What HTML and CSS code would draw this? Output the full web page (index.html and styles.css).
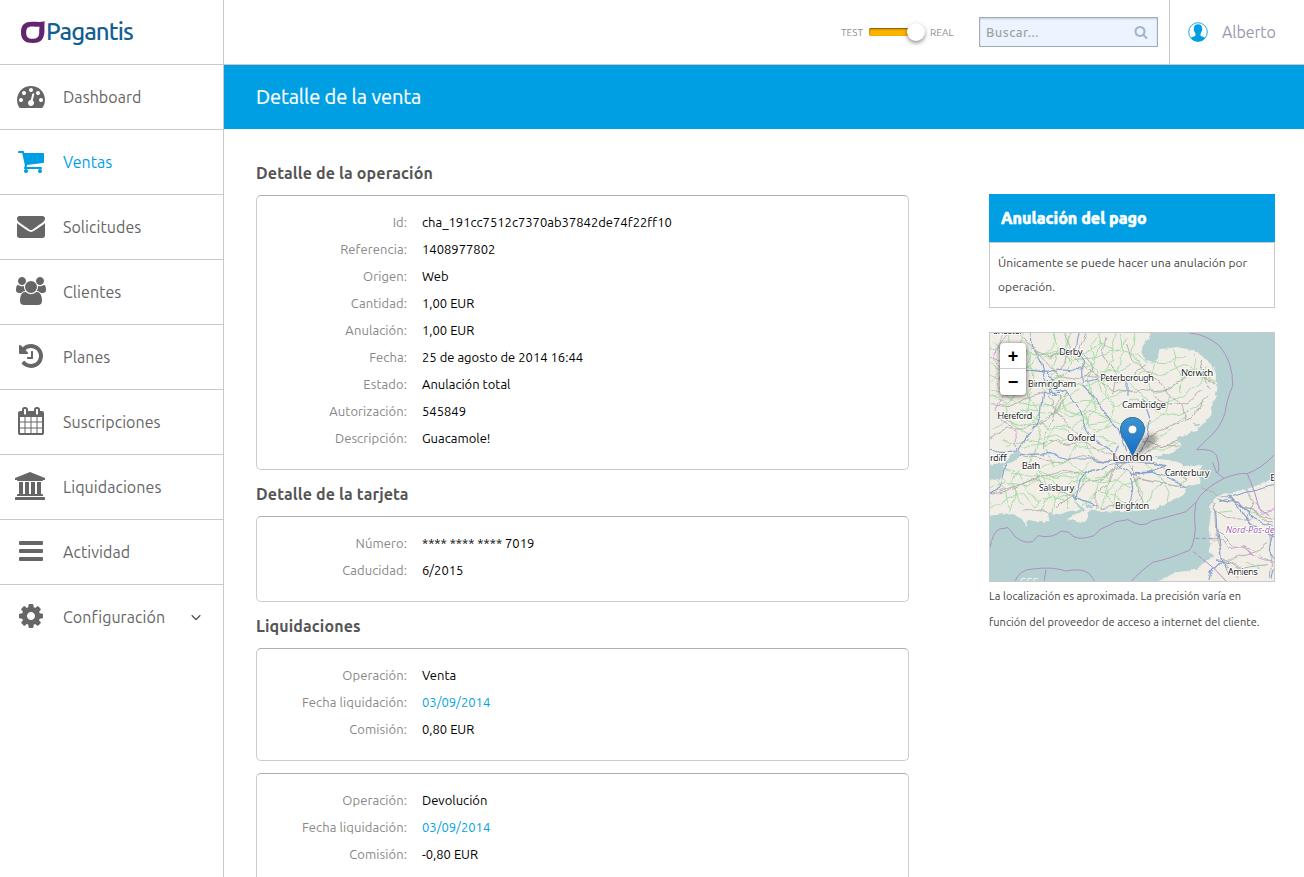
FILE: index.html
```html
<!DOCTYPE html>
<html lang="es">
<head>
<meta charset="utf-8">
<title>Pagantis - Detalle de la venta</title>
<link rel="stylesheet" href="styles.css">
</head>
<body>
<div class="app">
  <aside class="sidebar">
    <a class="logo">
      <svg class="logo-mark" viewBox="0 0 24 23" width="24" height="23"><path fill="#64256f" fill-rule="evenodd" d="M23.800 .3C23.300 2 23.500 5 23.500 9c0 9-3.500 13-11.500 13S0 19 0 11.500 3.500 .8 11 .8c4 0 9 .7 12.800-.5zM11.500 5.500C7 5.500 5.200 7 5.200 11.500s1.800 6.300 6.300 6.300 6.700-2 6.700-6.300c0-3.300.2-4.500.3-5.800-2 .2-5-.2-7-.2z"/></svg>
      <span class="logo-text">Pagantis</span>
    </a>
    <nav class="menu">
      <a class="item"><svg class="icon" viewBox="0 0 1792 1792"><path d="M384 1152q0-53-37.500-90.500t-90.500-37.500-90.500 37.500-37.500 90.500 37.500 90.500 90.500 37.500 90.500-37.500 37.500-90.500zm192-448q0-53-37.500-90.500t-90.500-37.500-90.500 37.500-37.500 90.500 37.500 90.500 90.500 37.500 90.500-37.500 37.500-90.500zm428 481l101-382q6-26-7.500-48.500t-38.500-29.500-48 6.500-30 39.500l-101 382q-60 5-107 43.500t-63 98.500q-20 77 20 146t117 89 146-20 89-117q16-60-6-117t-72-91zm660-33q0-53-37.500-90.500t-90.500-37.500-90.500 37.500-37.500 90.500 37.500 90.500 90.500 37.500 90.500-37.500 37.500-90.500zm-640-640q0-53-37.500-90.500t-90.500-37.500-90.500 37.500-37.500 90.500 37.500 90.500 90.500 37.500 90.500-37.500 37.500-90.500zm448 192q0-53-37.500-90.500t-90.500-37.500-90.500 37.500-37.500 90.500 37.500 90.500 90.500 37.500 90.500-37.500 37.500-90.500zm320 448q0 261-141 483-19 29-54 29h-1402q-35 0-54-29-141-221-141-483 0-182 71-348t191-286 286-191 348-71 348 71 286 191 191 286 71 348z"/></svg><span class="name">Dashboard</span></a>
      <a class="item active"><svg class="icon" viewBox="0 0 1792 1792"><path d="M704 1536q0 52-38 90t-90 38-90-38-38-90 38-90 90-38 90 38 38 90zm896 0q0 52-38 90t-90 38-90-38-38-90 38-90 90-38 90 38 38 90zm128-1088v512q0 24-16.500 42.500t-40.500 21.500l-1044 122q13 60 13 70 0 16-24 64h920q26 0 45 19t19 45-19 45-45 19h-1024q-26 0-45-19t-19-45q0-11 8-31.500t16-36 21.500-40 15.500-29.500l-177-823h-204q-26 0-45-19t-19-45 19-45 45-19h256q16 0 28.500 6.500t19.500 15.500 13 24.500 8 26 5.500 29.500 4.500 26h1201q26 0 45 19t19 45z"/></svg><span class="name">Ventas</span></a>
      <a class="item"><svg class="icon" viewBox="0 0 1792 1792"><path d="M1792 710v794q0 66-47 113t-113 47h-1472q-66 0-113-47t-47-113v-794q44 49 101 87 362 246 497 345 57 42 92.500 65.500t94.500 48 110 24.500h2q51 0 110-24.500t94.500-48 92.500-65.500q170-123 498-345 57-39 100-87zm0-294q0 79-49 151t-122 123q-376 261-468 325-10 7-42.500 31t-54 38.500-52 32.500-57.500 27-50 9h-2q-23 0-50-9t-57.500-27-52-32.500-54-38.500-42.500-31q-91-64-262-182.500t-205-142.500q-62-42-117-115.500t-55-136.500q0-78 41.500-130t118.500-52h1472q65 0 112.500 47t47.500 113z"/></svg><span class="name">Solicitudes</span></a>
      <a class="item"><svg class="icon" viewBox="64 0 1920 1792"><path d="M657 896q-162 5-265 128h-134q-82 0-138-40.500t-56-118.500q0-353 124-353 6 0 43.500 21t97.500 42.500 119 21.500q67 0 133-23-5 37-5 66 0 139 81 256zm1071 637q0 120-73 189.500t-194 69.500h-874q-121 0-194-69.500t-73-189.500q0-53 3.500-103.500t14-109 26.500-108.500 43-97.500 62-81 85.500-53.500 111.500-20q10 0 43 21.500t73 48 107 48 135 21.500 135-21.500 107-48 73-48 43-21.500q61 0 111.500 20t85.500 53.500 62 81 43 97.500 26.500 108.500 14 109 3.500 103.500zm-1024-1277q0 106-75 181t-181 75-181-75-75-181 75-181 181-75 181 75 75 181zm704 384q0 159-112.500 271.500t-271.500 112.500-271.500-112.500-112.500-271.500 112.500-271.500 271.500-112.500 271.500 112.500 112.500 271.500zm576 225q0 78-56 118.500t-138 40.500h-134q-103-123-265-128 81-117 81-256 0-29-5-66 66 23 133 23 59 0 119-21.500t97.500-42.500 43.500-21q124 0 124 353zm-128-609q0 106-75 181t-181 75-181-75-75-181 75-181 181-75 181 75 75 181z"/></svg><span class="name">Clientes</span></a>
      <a class="item"><svg class="icon" viewBox="0 0 1792 1792"><path d="M1664 896q0 156-61 298t-164 245-245 164-298 61q-172 0-327-72.500t-264-204.500q-7-10-6.500-22.500t8.500-20.500l137-138q10-9 25-9 16 2 23 12 73 95 179 147t225 52q104 0 198.500-40.500t163.500-109.500 109.500-163.500 40.500-198.500-40.500-198.500-109.500-163.500-163.500-109.500-198.500-40.500q-98 0-188 35.500t-160 101.500l137 138q31 30 14 69-17 40-59 40h-448q-26 0-45-19t-19-45v-448q0-42 40-59 39-17 69 14l130 129q107-101 244.500-156.500t284.500-55.500q156 0 298 61t245 164 164 245 61 298zm-640-288v448q0 14-9 23t-23 9h-320q-14 0-23-9t-9-23v-64q0-14 9-23t23-9h224v-352q0-14 9-23t23-9h64q14 0 23 9t9 23z"/></svg><span class="name">Planes</span></a>
      <a class="item"><svg class="icon" viewBox="0 0 1792 1792"><path d="M192 1664h288v-288h-288v288zm352 0h320v-288h-320v288zm-352-352h288v-320h-288v320zm352 0h320v-320h-320v320zm-352-384h288v-288h-288v288zm736 736h320v-288h-320v288zm-384-736h320v-288h-320v288zm768 736h288v-288h-288v288zm-384-352h320v-320h-320v320zm-352-864v-288q0-13-9.500-22.500t-22.500-9.500h-64q-13 0-22.500 9.500t-9.500 22.500v288q0 13 9.500 22.500t22.500 9.500h64q13 0 22.500-9.500t9.500-22.500zm736 864h288v-320h-288v320zm-384-384h320v-288h-320v288zm384 0h288v-288h-288v288zm32-480v-288q0-13-9.500-22.500t-22.500-9.500h-64q-13 0-22.500 9.500t-9.500 22.500v288q0 13 9.500 22.500t22.500 9.500h64q13 0 22.500-9.500t9.500-22.500zm384-64v1280q0 52-38 90t-90 38h-1408q-52 0-90-38t-38-90v-1280q0-52 38-90t90-38h128v-96q0-66 47-113t113-47h64q66 0 113 47t47 113v96h384v-96q0-66 47-113t113-47h64q66 0 113 47t47 113v96h128q52 0 90 38t38 90z"/></svg><span class="name">Suscripciones</span></a>
      <a class="item"><svg class="icon" viewBox="64 0 1920 1792"><path d="M960 0l960 384v128h-128q0 26-20.500 45t-48.500 19h-1526q-28 0-48.500-19t-20.500-45h-128v-128zm-704 640h256v768h128v-768h256v768h128v-768h256v768h128v-768h256v768h59q28 0 48.500 19t20.500 45v64h-1664v-64q0-26 20.500-45t48.500-19h59v-768zm1595 960q28 0 48.500 19t20.500 45v128h-1920v-128q0-26 20.500-45t48.500-19h1782z"/></svg><span class="name">Liquidaciones</span></a>
      <a class="item"><svg class="icon" viewBox="0 0 28 28"><path d="M3 4h22a1 1 0 0 1 1 1v2a1 1 0 0 1-1 1H3a1 1 0 0 1-1-1V5a1 1 0 0 1 1-1zM3 12h22a1 1 0 0 1 1 1v2a1 1 0 0 1-1 1H3a1 1 0 0 1-1-1v-2a1 1 0 0 1 1-1zM3 20h22a1 1 0 0 1 1 1v2a1 1 0 0 1-1 1H3a1 1 0 0 1-1-1v-2a1 1 0 0 1 1-1z"/></svg><span class="name">Actividad</span></a>
      <a class="item"><svg class="icon" viewBox="0 0 1792 1792"><path d="M1152 896q0-106-75-181t-181-75-181 75-75 181 75 181 181 75 181-75 75-181zm512-109v222q0 12-8 23t-20 13l-185 28q-19 54-39 91 35 50 107 138 10 12 10 25t-9 23q-27 37-99 108t-94 71q-12 0-26-9l-138-108q-44 23-91 38-16 136-29 186-7 28-36 28h-222q-14 0-24.500-8.500t-11.500-21.500l-28-184q-49-16-90-37l-141 107q-10 9-25 9-14 0-25-11-126-114-165-168-7-10-7-23 0-12 8-23 15-21 51-66.500t54-70.500q-27-50-41-99l-183-27q-13-2-21-12.500t-8-23.500v-222q0-12 8-23t19-13l186-28q14-46 39-92-40-57-107-138-10-12-10-24 0-10 9-23 26-36 98.500-107.500t94.500-71.500q13 0 26 10l138 107q44-23 91-38 16-136 29-186 7-28 36-28h222q14 0 24.500 8.500t11.500 21.500l28 184q49 16 90 37l142-107q9-9 24-9 13 0 25 10 129 119 165 170 7 8 7 22 0 12-8 23-15 21-51 66.500t-54 70.500q26 50 41 98l183 28q13 2 21 12.500t8 23.500z"/></svg><span class="name">Configuración</span><svg class="chevron" viewBox="0 0 10 7" width="10" height="7"><path d="M.7 1.200L5 5.500 9.300 1.200" fill="none" stroke="#555" stroke-width="1.300"/></svg></a>
    </nav>
  </aside>
  <div class="main">
    <header class="topbar">
      <div class="switch">
        <span class="mode">TEST</span>
        <span class="track"><span class="knob"></span></span>
        <span class="mode">REAL</span>
      </div>
      <div class="search"><span class="placeholder">Buscar...</span><svg viewBox="0 0 1792 1792" width="14" height="14"><path fill="#a3b3c8" d="M1216 832q0-185-131.500-316.500t-316.500-131.500-316.500 131.500-131.500 316.500 131.500 316.500 316.500 131.500 316.500-131.500 131.500-316.500zm512 832q0 52-38 90t-90 38q-54 0-90-38l-343-342q-179 124-399 124-143 0-273.500-55.500t-225-150-150-225-55.500-273.500 55.500-273.500 150-225 225-150 273.500-55.500 273.500 55.500 225 150 150 225 55.500 273.500q0 220-124 399l343 343q37 37 37 90z"/></svg></div>
      <div class="user">
        <svg viewBox="0 0 20 20" width="20" height="20"><circle cx="10" cy="10" r="9.300" fill="#fff" stroke="#009fe4" stroke-width=".9"/><path fill="#009fe4" d="M10 2.200c2.600 0 4.100 1.600 4.100 4.100 0 .9.300 1 .1 2-.1.700-.5.900-.7 1.400-.3 1-.6 1.600-1 2.100v1.700c.8 1 3.300 1.200 4.700 2.400-1.600 2.200-4.300 3.600-7.200 3.600s-5.600-1.400-7.200-3.600c1.400-1.200 3.900-1.400 4.700-2.400v-1.700c-.4-.5-.7-1.100-1-2.100-.2-.5-.6-.7-.7-1.400-.2-1 .1-1.100.1-2 0-2.500 1.500-4.100 4.100-4.100z"/></svg>
        <span class="user-name">Alberto</span>
      </div>
    </header>
    <div class="title-bar"><h1>Detalle de la venta</h1></div>
    <div class="content">
      <section class="details">
        <h2>Detalle de la operación</h2>
        <dl class="panel">
          <dt>Id:</dt><dd>cha_191cc7512c7370ab37842de74f22ff10</dd>
          <dt>Referencia:</dt><dd>1408977802</dd>
          <dt>Origen:</dt><dd>Web</dd>
          <dt>Cantidad:</dt><dd>1,00 EUR</dd>
          <dt>Anulación:</dt><dd>1,00 EUR</dd>
          <dt>Fecha:</dt><dd>25 de agosto de 2014 16:44</dd>
          <dt>Estado:</dt><dd>Anulación total</dd>
          <dt>Autorización:</dt><dd>545849</dd>
          <dt>Descripción:</dt><dd>Guacamole!</dd>
        </dl>
        <h2>Detalle de la tarjeta</h2>
        <dl class="panel">
          <dt>Número:</dt><dd>**** **** **** 7019</dd>
          <dt>Caducidad:</dt><dd>6/2015</dd>
        </dl>
        <h2>Liquidaciones</h2>
        <dl class="panel">
          <dt>Operación:</dt><dd>Venta</dd>
          <dt>Fecha liquidación:</dt><dd class="link">03/09/2014</dd>
          <dt>Comisión:</dt><dd>0,80 EUR</dd>
        </dl>
        <dl class="panel next">
          <dt>Operación:</dt><dd>Devolución</dd>
          <dt>Fecha liquidación:</dt><dd class="link">03/09/2014</dd>
          <dt>Comisión:</dt><dd>-0,80 EUR</dd>
        </dl>
      </section>
      <aside class="extra">
        <div class="refund">
          <h3>Anulación del pago</h3>
          <p>Únicamente se puede hacer una anulación por<br>operación.</p>
        </div>
        <div class="map">
          <svg class="tiles" viewBox="12 12 852 744" width="284" height="248">
            <defs>
              <filter id="wiggle" filterUnits="userSpaceOnUse" x="0" y="0" width="880" height="780"><feTurbulence type="fractalNoise" baseFrequency=".022" numOctaves="2" seed="4"/><feDisplacementMap in="SourceGraphic" scale="24" xChannelSelector="R" yChannelSelector="G"/></filter>
              <filter id="coast" filterUnits="userSpaceOnUse" x="0" y="0" width="880" height="780"><feTurbulence type="fractalNoise" baseFrequency=".06" numOctaves="2" seed="9"/><feDisplacementMap in="SourceGraphic" scale="12" xChannelSelector="R" yChannelSelector="G"/></filter>
              <clipPath id="britain"><path d="M12 12H502L486 30 470 52 466 72 478 92 505 100 516 88 520 60 548 58 570 54 615 62 640 74 662 94 684 118 692 140 694 176 688 204 676 235 672 262 652 284 632 302 604 318 576 330 584 352 560 372 520 378 514 390 546 392 584 402 592 412 650 406 640 428 644 462 602 474 590 500 562 512 534 528 506 540 450 546 390 546 350 550 324 542 300 548 276 524 262 520 282 542 252 546 220 556 186 552 160 560 126 562 84 556 40 556 12 562V452L46 450 54 408 88 394 106 374 96 360 74 380 60 402 12 408Z"/></clipPath>
            </defs>
            <g filter="url(#coast)">
              <path class="land" d="M0 0H502L486 30 470 52 466 72 478 92 505 100 516 88 520 60 548 58 570 54 615 62 640 74 662 94 684 118 692 140 694 176 688 204 676 235 672 262 652 284 632 302 604 318 576 330 584 352 560 372 520 378 514 390 546 392 584 402 592 412 650 406 640 428 644 462 602 474 590 500 562 512 534 528 506 540 450 546 390 546 350 550 324 542 300 548 276 524 262 520 282 542 252 546 220 556 186 552 190 576 160 580 126 572 122 594 112 574 84 556 40 556 0 562V452L46 450 54 408 88 394 106 374 96 360 74 380 60 402 0 408Z"/>
              <path class="land" d="M244 570L276 552 304 544 306 566 290 582 272 578ZM880 440L840 458 790 478 740 490 700 500 672 524 674 560 668 600 674 640 668 668 686 680 660 700 630 722 570 730 505 762V780H880Z"/>
              <path class="water" d="M500 386L540 376 590 366 600 394 545 392ZM576 330L606 322 596 316 570 326ZM300 520L318 530 320 540 300 536ZM620 284L650 286 632 292Z"/>
            </g>
            <g clip-path="url(#britain)">
              <g filter="url(#wiggle)">
                <g class="minor">
                  <path id="lanes" d="M20 40L60 72 100 54 150 80 210 70 260 92 330 86 390 60 450 74 480 100 540 104 600 76M60 12L74 50 66 100 96 140 88 200 60 230 76 290 130 320M200 12L214 60 196 110 224 150 300 176 350 150 420 160 470 130 530 136 600 110 690 160M250 12L240 50 268 80 330 120 350 190 390 230 450 210 520 230 590 200 640 160 660 110M340 12L350 50 320 90 310 150 320 210 290 260 320 300 380 290M400 12L412 70 390 120 430 160 470 200 530 260 600 250 660 216M450 12L440 70 470 120M110 30L140 60 120 110 170 130M12 110L50 130 110 140M12 190L60 200 120 230 200 226 250 260 320 250 370 270M20 300L70 280 140 290 210 250 240 200 280 180M130 250L190 300 240 300 270 350 340 360 400 340M60 350L120 330 180 350 240 330 300 340M140 190L120 250 160 300 150 350 130 400 170 440 190 500 160 550M12 480L60 460 120 470 180 440 250 450 320 420M12 540L60 510 110 490 140 530 200 500 250 520M70 550L90 500 80 460 100 420M180 360L200 410 250 400 300 440 280 490M200 550L216 500 250 460 310 450 370 440M290 530L330 490 350 440 400 420M340 540L370 480 400 450 420 420M380 540L390 490 420 460 470 450M430 540L470 500 450 450M480 540L500 490 530 460 580 470 600 450M540 520L550 490 520 440 480 400M480 360L520 330 560 290 600 260M460 310L500 280 540 250 550 200M500 360L540 360 580 340M510 100L490 150 500 190 550 180 600 140 640 120M560 60L570 110 590 150 580 190M620 70L630 120 660 150 690 150"/>
                  <use href="#lanes" transform="translate(450 -8) scale(-1 1)"/>
                </g>
                <g class="grey">
                  <path d="M86 12L120 40 150 56 180 100 220 140 280 150 330 140 380 180 450 190 550 180 620 130 690 164M12 90L60 100 110 96M12 224L70 230 130 210 170 190M12 324L60 300 120 300 190 270 220 230 240 190M170 180L210 240 240 280 300 340 350 370 420 400 500 396 540 420 600 450M40 490L100 466 150 450 220 430 300 430 370 410 430 400 440 340 500 320 550 290 610 270 670 200M12 500L60 490 140 450 200 480 260 500 300 460 350 450 420 400M110 380L170 390 230 400 290 380 370 400M140 60L190 80 250 70 300 120 360 150 410 160 480 110M420 30L440 90 480 130 520 150 540 190 590 230 600 280M500 200L560 230 610 220 650 180M450 390L480 370 520 350 580 350M450 450L520 460 590 470 640 480M500 460L460 450 430 410M390 410L370 460 330 490 330 540M440 410L450 460 470 530M340 540L410 530 480 540M210 540L240 510 260 500M110 550L140 540 190 550M230 12L250 50 240 100 200 140M360 20L350 80 390 140 380 190M220 200L200 280 170 320 170 380M650 90L640 130 670 180M590 330L540 350 460 340M310 330L250 350 190 340M300 12L280 60 320 110 300 150"/>
                </g>
                <g class="motorway">
                  <path d="M134 12L140 50 160 80 170 130 186 170 240 190 270 220 290 280 320 330 360 350 400 390 430 400M122 122L180 130 230 120 290 126 292 170 320 200 350 250 400 300 420 370M190 170L210 200 170 190 164 240 150 290 120 330 90 370 110 380 60 400 50 450 44 480 12 500M12 360L40 370 90 370 110 376 200 374 250 390 310 390 370 400 430 400M280 12L270 60 292 90 290 130M420 160L420 200M470 210L490 270 480 330 460 370 440 400M400 350L390 380 400 420 440 436 490 430 540 410 480 400M450 430L500 430 560 450 600 470 640 470M370 410L300 430 280 460 270 510M260 500L330 530M436 436L440 480 430 540M180 130L210 150 190 190 230 190M300 160L340 150"/>
                </g>
              </g>
            </g>
            <g filter="url(#wiggle)">
              <g class="grey"><path d="M690 506L740 520 790 540 860 580M680 540L730 570 800 570M690 600L740 650 790 660 860 700M700 680L770 720 840 710M690 690L740 690 800 670 840 640M646 470L700 500 730 500 760 530 864 570M780 480L800 520 780 560 810 600M684 520L688 584 692 640 704 690 760 750M850 580L855 680 850 750"/></g>
              <g class="minor"><path d="M700 550L736 546M780 550L840 560M680 636L720 640M780 700L820 720M740 600L800 600"/></g>
              <g class="motorway"><path d="M688 540L694 620 704 690 730 740M690 690L730 700M700 510L760 520 790 560 860 590M864 470L780 490 700 515M860 610L850 660 866 700 855 750M730 500L800 590 864 620M705 695L680 720 668 750"/></g>
            </g>
            <g class="boundary">
              <path d="M610 12Q660 16 700 50Q742 100 740 170Q720 220 718 250Q702 300 664 330L632 362Q680 358 692 380Q704 420 694 432L714 448Q760 430 784 434Q830 416 864 378M714 448Q650 480 630 520Q622 560 628 600Q624 650 610 664Q550 690 500 700Q470 720 436 756M12 656Q20 610 40 600L66 596Q80 610 84 620Q110 645 140 638L156 620Q200 630 226 606L248 610Q270 640 324 620L344 600Q370 590 390 578L426 572Q470 600 496 576Q560 560 600 548L630 520M88 756Q100 722 140 720 200 712 240 726Q290 716 310 734L326 756M180 722L174 756M692 432L680 400M784 434L806 490 820 540 850 560M650 690L686 720 720 756"/>
              <path class="county" filter="url(#wiggle)" d="M60 20L30 60 24 100 46 130 36 170 50 200 30 240 50 280 90 310 92 370M676 630L706 634 730 660 770 650 800 680 830 690 864 700M806 520L830 550 864 540"/>
              <path stroke-dasharray="12 8" d="M628 628H680M622 668L650 690"/>
            </g>
            <g class="places">
              <text x="18" y="16" textLength="94">Chester</text>
              <text x="219" y="77" textLength="71">Derby</text>
              <text x="343" y="155" textLength="161">Peterborough</text>
              <text x="585" y="142" textLength="97">Norwich</text>
              <text x="125" y="175" textLength="146">Birmingham</text>
              <text x="34" y="270" textLength="105">Hereford</text>
              <text x="408" y="238" textLength="132">Cambridge</text>
              <text x="243" y="337" textLength="85">Oxford</text>
              <text x="12" y="396" textLength="50">rdiff</text>
              <text x="107" y="419" textLength="56">Bath</text>
              <text x="536" y="441" textLength="135">Canterbury</text>
              <text x="158" y="486" textLength="107">Salisbury</text>
              <text x="387" y="540" textLength="103">Brighton</text>
              <text x="725" y="739" textLength="91">Amiens</text>
              <text x="853" y="455">E</text>
              <text class="region" x="719" y="613" textLength="146">Nord-Pas-de</text>
              <text class="city" x="379" y="395" textLength="121">London</text>
              <text class="island" x="102" y="768">GGG</text>
            </g>
          </svg>
          <svg class="marker" viewBox="0 0 50 41" width="50" height="41">
            <defs><linearGradient id="pin" x1="0" y1="0" x2="0" y2="1"><stop offset="0" stop-color="#3f94cf"/><stop offset="1" stop-color="#126fc6"/></linearGradient></defs>
            <path class="pin-shadow" d="M13 39L22 23C27 16 36 15 37 20S27 34 13 39Z"/>
            <path d="M12.500 .5C5.500 .5 .5 5.800 .5 12.300c0 4.200 2 7.200 4 10.700l8 15.500 8-15.500c2-3.500 4-6.500 4-10.700C24.500 5.800 19.500 .5 12.500 .5z" fill="url(#pin)" stroke="#2e6c97" stroke-width="1"/>
            <circle cx="12.500" cy="12.500" r="4.300" fill="#fff" stroke="#2e6c97" stroke-width=".6"/>
          </svg>
          <div class="zoom"><span class="zoom-in">+</span><span>−</span></div>
        </div>
        <p class="note">La localización es aproximada. La precisión varía en<br>función del proveedor de acceso a internet del cliente.</p>
      </aside>
    </div>
  </div>
</div>
</body>
</html>
```
FILE: styles.css
```css
* { box-sizing: border-box; }
body { margin: 0; background: #fff; font-family: Ubuntu, "Noto Sans", sans-serif; color: #000; }
h1, h2, h3, p, dl, dd { margin: 0; }
.app { display: flex; height: 877px; overflow: hidden; }

.sidebar { width: 224px; flex: none; border-right: 1px solid #c9c9c9; }
.logo { display: flex; height: 65px; padding: 21px 0 0 21px; border-bottom: 1px solid #c9c9c9; }
.logo-mark { flex: none; }
.logo-text { margin: -1px 0 0 1px; font-size: 24px; line-height: 23px; font-weight: 500; color: #145f92; letter-spacing: -.95px; }
.item { display: flex; align-items: center; height: 65px; padding-left: 15px; border-bottom: 1px solid #c9c9c9; color: #666; }
.item:last-child { border-bottom-color: transparent; }
.item.active { color: #009fe4; }
.icon { width: 32px; height: 28px; margin-top: -3px; fill: currentColor; flex: none; }
.name { width: 128px; margin-left: 16px; font-size: 16px; letter-spacing: .06px; white-space: nowrap; }
.chevron { flex: none; margin-top: 1px; }

.main { flex: 1; min-width: 0; }
.topbar { display: flex; align-items: center; justify-content: flex-end; height: 65px; border-bottom: 1px solid #c9c9c9; }
.switch { display: flex; align-items: center; width: 138px; }
.mode { width: 28px; font-size: 10px; color: #8e8e8e; }
.track { position: relative; width: 55px; height: 8px; margin-right: 6px; border-radius: 2px; background: #fdb400; box-shadow: inset 0 1px 2px rgba(90, 50, 0, .8); }
.knob { position: absolute; left: 38px; top: -5px; width: 18px; height: 18px; border-radius: 50%; background: #fff; box-shadow: 0 2px 4px rgba(0, 0, 0, .45); }
.search { display: flex; align-items: center; justify-content: space-between; width: 179px; height: 30px; padding: 0 9px 0 6px; border: 1px solid #a3acba; background: #ebf4ff; box-shadow: inset 0 1px 2px rgba(0, 0, 0, .18); }
.placeholder { font-size: 13px; font-weight: 500; letter-spacing: .45px; color: #a3a3a3; }
.user { display: flex; align-items: center; align-self: stretch; width: 135px; margin-left: 11px; padding-left: 18px; border-left: 1px solid #c9c9c9; }
.user-name { margin-left: 14px; font-size: 16px; letter-spacing: -.1px; color: #999aab; }
.title-bar { display: flex; align-items: center; height: 64px; padding: 0 0 2px 32px; background: #009fe4; }
h1 { font-size: 20px; font-weight: 400; letter-spacing: -.1px; color: #fff; -webkit-text-stroke: .2px #fff; }

.content { display: flex; justify-content: space-between; padding: 20px 29px 0 32px; }
.details { width: 653px; }
h2 { height: 46px; font-size: 16px; line-height: 48px; font-weight: 700; letter-spacing: .13px; color: #555; }
.panel { display: grid; grid-template-columns: 150px 1fr; column-gap: 15px; padding: 13px 0 17px; border: 1px solid #ccc; border-top-color: #b0b0b0; border-radius: 5px; font-size: 13px; line-height: 27px; }
.panel.next { margin-top: 12px; }
dt { text-align: right; letter-spacing: .08px; color: #888; }
.link { color: #009fe4; }

.extra { width: 286px; padding-top: 45px; }
.refund h3 { height: 48px; padding-left: 12px; font-size: 16px; line-height: 48px; font-weight: 800; color: #fff; background: #009fe4; -webkit-text-stroke: .5px #fff; }
.refund p { height: 66px; padding: 8px 8px 0; border: 1px solid #c9c9c9; font-size: 12px; line-height: 24px; letter-spacing: .05px; color: #444; white-space: nowrap; }
.map { position: relative; height: 250px; margin-top: 24px; border: 1px solid #c9c9c9; background: #b5d0d0; overflow: hidden; }
.tiles { display: block; }
.land { fill: #f1eee8; }
.water { fill: #b5d0d0; }
.minor, .grey, .motorway, .boundary { fill: none; stroke-linejoin: round; }
.minor { stroke: #a4dba4; stroke-width: 2.800; }
.grey { stroke: #b0aeab; stroke-width: 2.800; }
.motorway { stroke: #849fce; stroke-width: 3.300; }
.boundary { stroke: #b08fc4; stroke-width: 3; }
.county { stroke: #d3a3d6; }
.places { font-family: "Noto Sans", sans-serif; font-size: 29px; fill: #222; stroke: #fff; stroke-width: 6px; stroke-linejoin: round; paint-order: stroke; }
.places .city { font-size: 35px; }
.places .region { font-size: 27px; font-style: italic; fill: #9b5fb0; }
.places .island { fill: #fff; font-size: 26px; stroke: none; }
.marker { position: absolute; left: 130px; top: 84px; }
.pin-shadow { fill: rgba(0, 0, 0, .32); filter: blur(2px); }
.zoom { position: absolute; left: 10px; top: 10px; width: 26px; height: 52px; border-radius: 4px; background: #fff; box-shadow: 0 1px 5px rgba(0, 0, 0, .65); font: bold 18px/26px "Liberation Sans", sans-serif; text-align: center; }
.zoom span { display: block; height: 26px; }
.zoom .zoom-in { border-bottom: 1px solid #ccc; }
.note { padding-top: 1px; font-size: 11px; line-height: 26px; letter-spacing: .06px; color: #444; white-space: nowrap; }
```
